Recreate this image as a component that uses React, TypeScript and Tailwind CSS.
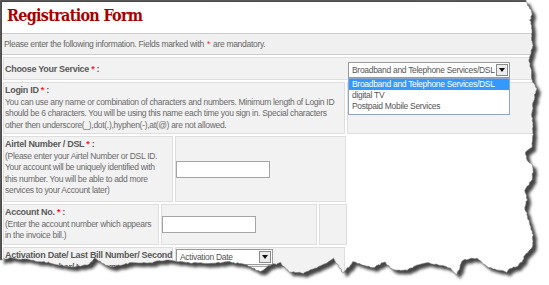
import React from "react";

// torn-paper outline, traced from the screenshot
const edge: [number, number][] = [
  [526, 0], [528, 5], [531, 10], [532, 15], [530, 20], [532, 28], [532, 40], [533, 47], [531, 52],
  [529, 60], [531, 70], [532, 80], [537, 88], [535, 95], [533, 105], [532, 115], [533, 125], [533, 140],
  [532, 147], [525, 152], [527, 160], [532, 165], [533, 170], [532, 180], [525, 190], [527, 200],
  [525, 208], [527, 215], [530, 225], [533, 235], [533, 245], [530, 250], [525, 255], [522, 262],
  [517, 266], [510, 269], [507, 272], [497, 270], [487, 267], [477, 258], [463, 260], [457, 275],
  [450, 268], [440, 265], [427, 263], [417, 265], [407, 270], [393, 270], [385, 262], [373, 268],
  [363, 265], [353, 262], [343, 273], [333, 258], [327, 263], [317, 268], [303, 273], [290, 272],
  [280, 263], [270, 265], [260, 272], [247, 265], [230, 262], [213, 263], [190, 263], [165, 260],
  [150, 263], [130, 263], [110, 267], [100, 262], [95, 258], [88, 265], [70, 267], [50, 263],
  [30, 260], [10, 258], [0, 260],
];

function jagged(pts: [number, number][]) {
  const out: string[] = [];
  let seed = 7;
  const rnd = () => {
    seed = (seed * 9301 + 49297) % 233280;
    return seed / 233280 - 0.5;
  };
  for (let i = 0; i < pts.length - 1; i++) {
    const [x1, y1] = pts[i];
    const [x2, y2] = pts[i + 1];
    const steps = Math.max(1, Math.round(Math.hypot(x2 - x1, y2 - y1) / 2));
    for (let s = 0; s < steps; s++) {
      const t = s / steps;
      out.push(`${(x1 + (x2 - x1) * t + rnd() * 1.2).toFixed(1)},${(y1 + (y2 - y1) * t + rnd() * 1.2).toFixed(1)}`);
    }
  }
  out.push(pts[pts.length - 1].join(","));
  return "M0,0 L" + out.join(" L") + " Z";
}

const paper = jagged(edge);
const outside = "M-10,-10 H560 V300 H-10 Z " + paper;

function Req() {
  return <span className="text-[#ff1a1a]">*</span>;
}

function Arrow() {
  return (
    <span className="flex h-[12px] w-[12px] shrink-0 items-center justify-center border border-[#8a8a8a] bg-[#ececec]">
      <svg width="6" height="4" viewBox="0 0 6 4">
        <path d="M0 0H6L3 4Z" fill="#111" />
      </svg>
    </span>
  );
}

const cell = "border border-[#dedede] bg-[#f2f2f2]";
const desc = "text-[8.5px] leading-[11.5px] tracking-[-0.3px] text-[#6a6a6a] whitespace-nowrap";
const label = "text-[9px] leading-[11.5px] tracking-[-0.3px] font-bold text-[#5a5a5a] whitespace-nowrap";

export default function App() {
  return (
    <div className="relative h-[285px] w-[549px] overflow-hidden bg-white font-['Liberation_Sans',Arial,sans-serif]">
      <div className="h-full border-l-2 border-t-2 border-[#4b4b4b]">
        <div className="h-[31px] pl-[5px] pt-[4px]">
          <h1 className="font-['DejaVu_Serif_Condensed','DejaVu_Serif',serif] text-[16px] font-bold leading-[20px] tracking-[-0.7px] text-[#a80000]">
            Registration Form
          </h1>
        </div>
        <div className="flex h-[22px] items-center whitespace-nowrap border-y border-[#cdcdcd] bg-[#f0f0f0] pl-[2px] text-[8.5px] tracking-[-0.3px] text-[#666]">
          Please enter the following information. Fields marked with <span className="mx-[3px] text-[#ff1a1a]">*</span> are mandatory.
        </div>
        <div className="mt-[2px] flex flex-col gap-[2px] pl-px">
          {/* choose service */}
          <div className={`${cell} flex h-[23px] items-center pt-[3px]`}>
            <div className={`${label} w-[344px] pl-px`}>
              Choose Your Service <Req /> :
            </div>
            <div className="relative">
              <div className="flex h-[16px] w-[162px] items-center justify-between whitespace-nowrap border border-[#9a9a9a] bg-white pl-[3px] pr-px text-[8.5px] tracking-[-0.3px] text-[#555]">
                Broadband and Telephone Services/DSL
                <Arrow />
              </div>
              <div className="absolute left-0 top-[16px] z-10 w-[162px] whitespace-nowrap border border-[#8fa6c8] bg-white pb-[2px] text-[8.5px] leading-[11px] tracking-[-0.3px] text-[#555]">
                <div className="bg-[#3399ff] pl-[3px] text-white">Broadband and Telephone Services/DSL</div>
                <div className="pl-[3px]">digital TV</div>
                <div className="pl-[3px]">Postpaid Mobile Services</div>
              </div>
            </div>
          </div>

          {/* login id */}
          <div className="flex h-[52px] gap-[2px]">
            <div className={`${cell} w-[342px] pl-px pt-[2px]`}>
              <div className={label}>
                Login ID <Req /> :
              </div>
              <div className={desc}>
                You can use any name or combination of characters and numbers. Minimum length of Login ID
                <br />
                should be 6 characters. You will be using this name each time you sign in. Special characters
                <br />
                other then underscore(_),dot(.),hyphen(-),at(@) are not allowed.
              </div>
            </div>
            <div className={`${cell} flex-1`} />
          </div>

          {/* airtel number */}
          <div className="flex h-[66px] gap-[2px]">
            <div className={`${cell} w-[170px] pl-px pt-[2px]`}>
              <div className={label}>
                Airtel Number / DSL <Req /> :
              </div>
              <div className={desc}>
                (Please enter your Airtel Number or DSL ID.
                <br />
                Your account will be uniquely identified with
                <br />
                this number. You will be able to add more
                <br />
                services to your Account later)
              </div>
            </div>
            <div className={`${cell} flex w-[171px] items-center`}>
              <div className="h-[17px] w-[94px] border border-[#a5a5a5] bg-white" />
            </div>
          </div>

          {/* account no */}
          <div className="flex h-[41px] gap-[2px]">
            <div className={`${cell} w-[156px] pl-px pt-[2px]`}>
              <div className={label}>
                Account No. <Req /> :
              </div>
              <div className={desc}>
                (Enter the account number which appears
                <br />
                in the invoice bill.)
              </div>
            </div>
            <div className={`${cell} flex w-[156px] items-center`}>
              <div className="h-[17px] w-[94px] border border-[#a5a5a5] bg-white" />
            </div>
            <div className={`${cell} w-[28px]`} />
          </div>

          {/* activation date */}
          <div className="flex h-[40px] gap-[2px]">
            <div className={`${cell} w-[170px] pl-px pt-[2px]`}>
              <div className={label}>
                Activation Date/ Last Bill Number/ Second
                <br />
                Last Bill Number/ Last Payment Amount
              </div>
            </div>
            <div className={`${cell} w-[170px] pt-px`}>
              <div className="flex h-[16px] w-[97px] items-center justify-between whitespace-nowrap border border-[#9a9a9a] bg-white pl-[3px] pr-px text-[8.5px] tracking-[-0.3px] text-[#555]">
                Activation Date
                <Arrow />
              </div>
              <div className="mt-px flex">
                <div className="h-[14px] w-[96px] border border-[#a5a5a5] bg-white" />
                <div className="ml-[2px] h-[14px] w-[10px] bg-[#ff2020]" />
              </div>
            </div>
          </div>
        </div>
      </div>

      <svg className="pointer-events-none absolute inset-0" width="549" height="285" viewBox="0 0 549 285">
        <defs>
          <filter id="sh" x="-5%" y="-5%" width="110%" height="110%">
            <feGaussianBlur stdDeviation="1.8" />
          </filter>
          <clipPath id="out">
            <path d={outside} clipRule="evenodd" />
          </clipPath>
        </defs>
        <path d={outside} fill="#fff" fillRule="evenodd" />
        <g clipPath="url(#out)">
          <path d={paper} transform="translate(4,4)" fill="#444" filter="url(#sh)" />
        </g>
        <path d={paper} fill="none" stroke="#777" strokeWidth="0.6" />
      </svg>
    </div>
  );
}
